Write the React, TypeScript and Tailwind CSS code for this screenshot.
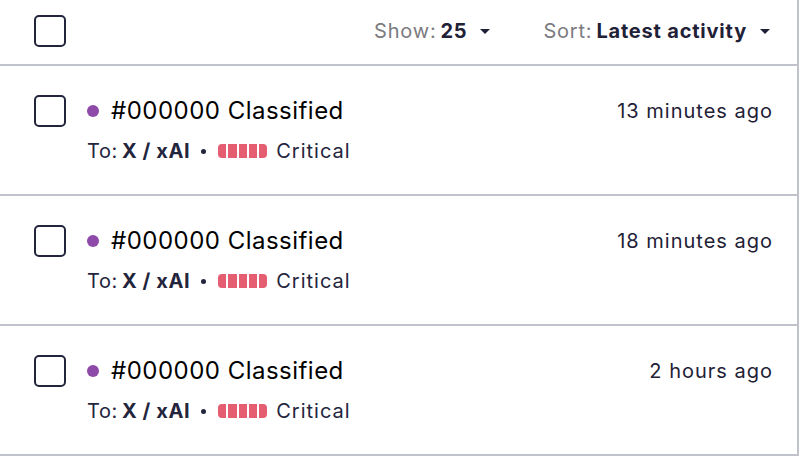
import React from "react";

type Ticket = { id: string; title: string; to: string; time: string };

const tickets: Ticket[] = [
  { id: "#000000", title: "Classified", to: "X / xAI", time: "13 minutes ago" },
  { id: "#000000", title: "Classified", to: "X / xAI", time: "18 minutes ago" },
  { id: "#000000", title: "Classified", to: "X / xAI", time: "2 hours ago" },
];

function Checkbox() {
  return <span className="block h-8 w-8 shrink-0 rounded-[5px] border-2 border-[#23253d] bg-white" />;
}

function Caret() {
  return <span className="ml-[13px] inline-block h-0 w-0 border-x-[5px] border-t-[5px] border-x-transparent border-t-[#1f2137]" />;
}

function SeverityBar() {
  return (
    <span className="flex h-[14px] items-stretch gap-[2px]">
      {[0, 1, 2, 3, 4].map((i) => (
        <span
          key={i}
          className={`w-[8.2px] bg-[#e45d70] ${i === 0 ? "rounded-l-[4px]" : ""} ${i === 4 ? "rounded-r-[4px]" : ""}`}
        />
      ))}
    </span>
  );
}

function TicketRow({ t }: { t: Ticket }) {
  return (
    <div className="flex items-start border-b-2 border-[#c0c2cc] pb-[31px] pl-[34px] pr-[24px] pt-[29px]">
      <Checkbox />
      <div className="ml-[21px] flex-1">
        <div className="flex h-8 items-center">
          <span className="h-3 w-3 rounded-full bg-[#8e4aa8]" />
          <span className="ml-3 text-[24px] tracking-[0.02em] text-black">
            {t.id} {t.title}
          </span>
        </div>
        <div className="mt-3 flex h-6 items-center text-[20px] tracking-[0.03em] text-[#23253d]">
          <span>To:</span>
          <span className="ml-1 font-bold">{t.to}</span>
          <span className="ml-[11px] mr-[12px] h-[5px] w-[5px] rounded-full bg-[#23253d]" />
          <SeverityBar />
          <span className="ml-[9px] tracking-[0.05em]">Critical</span>
        </div>
      </div>
      <div className="flex h-8 items-center text-[20px] tracking-[0.05em] text-[#1f2137]">{t.time}</div>
    </div>
  );
}

export default function App() {
  return (
    <div className="min-h-[462px] bg-white" style={{ fontFamily: "Inter, 'Noto Sans', sans-serif" }}>
      <div className="w-[799px] border-r-2 border-[#c0c2cc]">
        <div className="flex h-[66px] items-center border-b-2 border-[#c0c2cc] pb-[2px] pl-[34px] pr-[27px]">
          <Checkbox />
          <div className="ml-auto flex items-center text-[20px] tracking-[0.04em]">
            <span className="text-[#7b7b80]">Show:</span>
            <span className="ml-1 font-bold text-[#1f2137]">25</span>
            <Caret />
            <span className="ml-[53px] text-[#7b7b80]">Sort:</span>
            <span className="ml-1 font-bold text-[#1f2137]">Latest activity</span>
            <Caret />
          </div>
        </div>
        {tickets.map((t, i) => (
          <TicketRow key={i} t={t} />
        ))}
      </div>
    </div>
  );
}
